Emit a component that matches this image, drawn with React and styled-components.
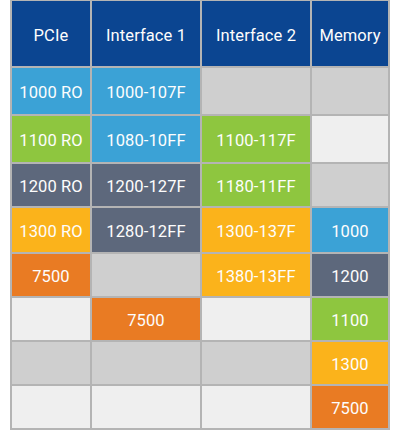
import React from 'react'
import styled, {createGlobalStyle} from 'styled-components'

const GlobalStyle = createGlobalStyle`
body {
    margin: 0;
    background: #ffffff;
    font-family: Roboto, "Liberation Sans", sans-serif;
}
`

const colors = {
    head: '#0b4591',
    blue: '#3ba2d6',
    green: '#8ec63f',
    slate: '#5d687c',
    yellow: '#fbb31b',
    orange: '#e97b23',
    gray: '#cfcfcf',
    light: '#efefef',
}

const header = ['PCIe', 'Interface 1', 'Interface 2', 'Memory']

const rows = [
    [['blue', '1000 RO'], ['blue', '1000-107F'], ['gray'], ['gray']],
    [['green', '1100 RO'], ['blue', '1080-10FF'], ['green', '1100-117F'], ['light']],
    [['slate', '1200 RO'], ['slate', '1200-127F'], ['green', '1180-11FF'], ['gray']],
    [['yellow', '1300 RO'], ['slate', '1280-12FF'], ['yellow', '1300-137F'], ['blue', '1000']],
    [['orange', '7500'], ['gray'], ['yellow', '1380-13FF'], ['slate', '1200']],
    [['light'], ['orange', '7500'], ['light'], ['green', '1100']],
    [['gray'], ['gray'], ['gray'], ['yellow', '1300']],
    [['light'], ['light'], ['light'], ['orange', '7500']],
]

export default function App() {
    return (
        <Page>
            <GlobalStyle />
            <Table>
                {header.map(h => (
                    <Cell key={h} tone="head" head>{h}</Cell>
                ))}
                {rows.map((row, r) =>
                    row.map(([tone, label], c) => (
                        <Cell key={r + '-' + c} tone={tone}>{label}</Cell>
                    ))
                )}
            </Table>
        </Page>
    )
}

const Page = styled.div`
width: 400px;
height: 432px;
padding-left: 10px;
box-sizing: border-box;
`

const Table = styled.div`
display: grid;
width: 380px;
box-sizing: border-box;
grid-template-columns: 78px 108px 108px 76px;
grid-template-rows: 65px 46px 46px 42px 44px 42px 42px 42px 42px;
gap: 2px;
padding: 1px 2px 2px 2px;
background: #b4b4b4;
`

const Cell = styled.div`
display: flex;
align-items: center;
justify-content: center;
padding-top: ${p => (p.head ? '4px' : '2px')};
box-sizing: border-box;
background: ${p => colors[p.tone]};
color: #fdfdfd;
font-size: 16.5px;
letter-spacing: 0.1px;
`
